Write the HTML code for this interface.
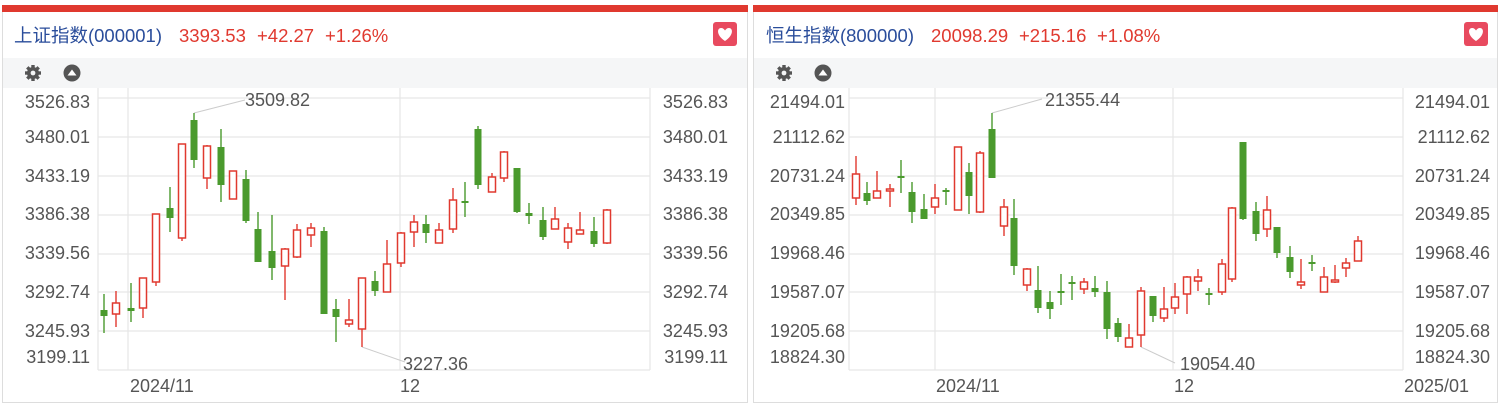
<!DOCTYPE html>
<html><head><meta charset="utf-8"><style>
html,body{margin:0;padding:0;background:#fff;width:1500px;height:405px;overflow:hidden}
svg{display:block}
text{font-family:"Liberation Sans","Noto Sans CJK SC",sans-serif}
.ax{fill:#555;font-size:18px}
.g line{stroke:#4a9a2d;stroke-width:1.4}
.g rect{fill:#4a9a2d}
.r line{stroke:#e0392f;stroke-width:1.4}
.r rect{fill:#fff;stroke:#e0392f;stroke-width:1.5}
.grid line{stroke:#e6e6e6;stroke-width:1.2}
.hd{font-size:18.5px}
</style></head><body>
<svg width="1500" height="405" viewBox="0 0 1500 405">
<defs>
<g id="gear"><circle r="6" fill="#555"/><g stroke="#555" stroke-width="3.4">
<line x1="0" y1="-8" x2="0" y2="8"/><line x1="-8" y1="0" x2="8" y2="0"/>
<line x1="-5.7" y1="-5.7" x2="5.7" y2="5.7"/><line x1="-5.7" y1="5.7" x2="5.7" y2="-5.7"/></g>
<circle r="2.4" fill="#f5f6f7"/></g>
<g id="up"><circle r="8.5" fill="#555"/><path d="M-4.5 2.5 L0 -3.5 L4.5 2.5Z" fill="#fff"/></g>
<g id="heart"><rect x="-12" y="-12" width="24" height="24" rx="3" fill="#e84a5f"/><path d="M0 7 C-9 1 -8 -6 -4 -6 C-2 -6 -1 -5 0 -3.5 C1 -5 2 -6 4 -6 C8 -6 9 1 0 7Z" fill="#fff"/></g>
</defs>

<!-- LEFT PANEL -->
<rect x="2.5" y="5.5" width="745" height="397" fill="#fff" stroke="#ddd"/>
<rect x="2" y="5" width="746" height="7" fill="#e0392f"/>
<rect x="3" y="58" width="744" height="30" fill="#f5f6f7"/>
<text class="hd" x="14" y="42" fill="#2a4d9b" textLength="148" lengthAdjust="spacingAndGlyphs">上证指数(000001)</text>
<text class="hd" x="179" y="42" fill="#e0392f">3393.53</text>
<text class="hd" x="257" y="42" fill="#e0392f">+42.27</text>
<text class="hd" x="325" y="42" fill="#e0392f">+1.26%</text>
<use href="#heart" x="725" y="34"/>
<use href="#gear" x="33" y="73"/>
<use href="#up" x="72" y="73"/>
<g class="grid">
<line x1="98" y1="98" x2="650" y2="98"/><line x1="98" y1="137" x2="650" y2="137"/><line x1="98" y1="176" x2="650" y2="176"/><line x1="98" y1="215" x2="650" y2="215"/><line x1="98" y1="254" x2="650" y2="254"/><line x1="98" y1="292" x2="650" y2="292"/><line x1="98" y1="331" x2="650" y2="331"/><line x1="98" y1="370" x2="650" y2="370"/>
<line x1="98" y1="88" x2="98" y2="370"/><line x1="128" y1="88" x2="128" y2="370"/><line x1="400" y1="88" x2="400" y2="370"/><line x1="650" y1="88" x2="650" y2="370"/>
</g>
<g class="ax" text-anchor="end">
<text x="90" y="108">3526.83</text><text x="90" y="143">3480.01</text><text x="90" y="182">3433.19</text><text x="90" y="220">3386.38</text><text x="90" y="259">3339.56</text><text x="90" y="298">3292.74</text><text x="90" y="337">3245.93</text><text x="90" y="363">3199.11</text>
<text x="728" y="108">3526.83</text><text x="728" y="143">3480.01</text><text x="728" y="182">3433.19</text><text x="728" y="220">3386.38</text><text x="728" y="259">3339.56</text><text x="728" y="298">3292.74</text><text x="728" y="337">3245.93</text><text x="728" y="363">3199.11</text>
</g>
<text class="ax" x="130" y="392">2024/11</text>
<text class="ax" x="400" y="392">12</text>
<polyline points="194,113 245,100" fill="none" stroke="#ccc"/>
<text class="ax" x="245" y="106">3509.82</text>
<polyline points="362,347 405,362" fill="none" stroke="#ccc"/>
<text class="ax" x="403" y="370">3227.36</text>

<g class="g">
<line x1="104" y1="294" x2="104" y2="333"/><rect x="100.5" y="310" width="7" height="6"/>
<line x1="131" y1="283" x2="131" y2="322"/><rect x="127.5" y="308" width="7" height="3"/>
<line x1="170" y1="187" x2="170" y2="232"/><rect x="166.5" y="208" width="7" height="10"/>
<line x1="194" y1="113" x2="194" y2="168"/><rect x="190.5" y="120" width="7" height="40"/>
<line x1="221" y1="129" x2="221" y2="202"/><rect x="217.5" y="147" width="7" height="38"/>
<line x1="246" y1="170" x2="246" y2="223"/><rect x="242.5" y="179" width="7" height="42"/>
<line x1="258" y1="212" x2="258" y2="262"/><rect x="254.5" y="229" width="7" height="33"/>
<line x1="272" y1="215" x2="272" y2="280"/><rect x="268.5" y="251" width="7" height="17"/>
<line x1="324" y1="227" x2="324" y2="314"/><rect x="320.5" y="231" width="7" height="83"/>
<line x1="336" y1="299" x2="336" y2="342"/><rect x="332.5" y="309" width="7" height="8"/>
<line x1="375" y1="271" x2="375" y2="296"/><rect x="371.5" y="281" width="7" height="10"/>
<line x1="426" y1="215" x2="426" y2="243"/><rect x="422.5" y="224" width="7" height="9"/>
<line x1="465" y1="182" x2="465" y2="217"/><rect x="461.5" y="201" width="7" height="2"/>
<line x1="478" y1="126" x2="478" y2="189"/><rect x="474.5" y="129" width="7" height="56"/>
<line x1="517" y1="168" x2="517" y2="213"/><rect x="513.5" y="168" width="7" height="44"/>
<line x1="529" y1="203" x2="529" y2="224"/><rect x="525.5" y="213" width="7" height="3"/>
<line x1="543" y1="207" x2="543" y2="240"/><rect x="539.5" y="220" width="7" height="17"/>
<line x1="594" y1="217" x2="594" y2="247"/><rect x="590.5" y="231" width="7" height="13"/>
</g>
<g class="r">
<line x1="116" y1="291" x2="116" y2="327"/><rect x="112.5" y="303" width="7" height="11"/>
<line x1="143" y1="278" x2="143" y2="318"/><rect x="139.5" y="278" width="7" height="30"/>
<line x1="156" y1="214" x2="156" y2="286"/><rect x="152.5" y="214" width="7" height="68"/>
<line x1="182" y1="144" x2="182" y2="241"/><rect x="178.5" y="144" width="7" height="94"/>
<line x1="207" y1="145" x2="207" y2="189"/><rect x="203.5" y="146" width="7" height="32"/>
<line x1="233" y1="171" x2="233" y2="199"/><rect x="229.5" y="171" width="7" height="28"/>
<line x1="285" y1="248" x2="285" y2="300"/><rect x="281.5" y="249" width="7" height="17"/>
<line x1="297" y1="224" x2="297" y2="258"/><rect x="293.5" y="230" width="7" height="27"/>
<line x1="311" y1="223" x2="311" y2="247"/><rect x="307.5" y="228" width="7" height="7"/>
<line x1="349" y1="299" x2="349" y2="327"/><rect x="345.5" y="320" width="7" height="4"/>
<line x1="362" y1="278" x2="362" y2="347"/><rect x="358.5" y="278" width="7" height="51"/>
<line x1="387" y1="240" x2="387" y2="292"/><rect x="383.5" y="264" width="7" height="28"/>
<line x1="401" y1="232" x2="401" y2="267"/><rect x="397.5" y="233" width="7" height="30"/>
<line x1="414" y1="215" x2="414" y2="247"/><rect x="410.5" y="222" width="7" height="10"/>
<line x1="439" y1="223" x2="439" y2="243"/><rect x="435.5" y="230" width="7" height="13"/>
<line x1="453" y1="188" x2="453" y2="233"/><rect x="449.5" y="200" width="7" height="29"/>
<line x1="492" y1="173" x2="492" y2="192"/><rect x="488.5" y="177" width="7" height="15"/>
<line x1="504" y1="151" x2="504" y2="182"/><rect x="500.5" y="152" width="7" height="26"/>
<line x1="555" y1="207" x2="555" y2="229"/><rect x="551.5" y="219" width="7" height="10"/>
<line x1="568" y1="223" x2="568" y2="249"/><rect x="564.5" y="228" width="7" height="14"/>
<line x1="580" y1="212" x2="580" y2="234"/><rect x="576.5" y="230" width="7" height="4"/>
<line x1="607" y1="209" x2="607" y2="244"/><rect x="603.5" y="210" width="7" height="33"/>
</g>

<!-- RIGHT PANEL -->
<rect x="753.5" y="5.5" width="744" height="397" fill="#fff" stroke="#ddd"/>
<rect x="753" y="5" width="745" height="7" fill="#e0392f"/>
<rect x="754" y="58" width="743" height="30" fill="#f5f6f7"/>
<text class="hd" x="766" y="42" fill="#2a4d9b" textLength="148" lengthAdjust="spacingAndGlyphs">恒生指数(800000)</text>
<text class="hd" x="931" y="42" fill="#e0392f">20098.29</text>
<text class="hd" x="1019" y="42" fill="#e0392f">+215.16</text>
<text class="hd" x="1097" y="42" fill="#e0392f">+1.08%</text>
<use href="#heart" x="1476" y="34"/>
<use href="#gear" x="784" y="73"/>
<use href="#up" x="823" y="73"/>
<g class="grid">
<line x1="849" y1="98" x2="1403" y2="98"/><line x1="849" y1="137" x2="1403" y2="137"/><line x1="849" y1="176" x2="1403" y2="176"/><line x1="849" y1="215" x2="1403" y2="215"/><line x1="849" y1="254" x2="1403" y2="254"/><line x1="849" y1="292" x2="1403" y2="292"/><line x1="849" y1="331" x2="1403" y2="331"/><line x1="849" y1="370" x2="1403" y2="370"/>
<line x1="849" y1="88" x2="849" y2="370"/><line x1="935" y1="88" x2="935" y2="370"/><line x1="1173" y1="88" x2="1173" y2="370"/><line x1="1403" y1="88" x2="1403" y2="370"/>
</g>
<g class="ax" text-anchor="end">
<text x="845" y="108">21494.01</text><text x="845" y="143">21112.62</text><text x="845" y="182">20731.24</text><text x="845" y="220">20349.85</text><text x="845" y="259">19968.46</text><text x="845" y="298">19587.07</text><text x="845" y="337">19205.68</text><text x="845" y="363">18824.30</text>
<text x="1490" y="108">21494.01</text><text x="1490" y="143">21112.62</text><text x="1490" y="182">20731.24</text><text x="1490" y="220">20349.85</text><text x="1490" y="259">19968.46</text><text x="1490" y="298">19587.07</text><text x="1490" y="337">19205.68</text><text x="1490" y="363">18824.30</text>
</g>
<text class="ax" x="936" y="392">2024/11</text>
<text class="ax" x="1174" y="392">12</text>
<text class="ax" x="1404" y="392">2025/01</text>
<polyline points="992,113 1042,99" fill="none" stroke="#ccc"/>
<text class="ax" x="1045" y="106">21355.44</text>
<polyline points="1141,347 1175,363" fill="none" stroke="#ccc"/>
<text class="ax" x="1180" y="370">19054.40</text>

<g class="g">
<line x1="867" y1="182" x2="867" y2="205"/><rect x="863.5" y="193" width="7" height="8"/>
<line x1="901" y1="160" x2="901" y2="193"/><rect x="897.5" y="176" width="7" height="2"/>
<line x1="912" y1="182" x2="912" y2="223"/><rect x="908.5" y="192" width="7" height="20"/>
<line x1="924" y1="194" x2="924" y2="219"/><rect x="920.5" y="209" width="7" height="10"/>
<line x1="946" y1="188" x2="946" y2="205"/><rect x="942.5" y="190" width="7" height="2"/>
<line x1="969" y1="163" x2="969" y2="214"/><rect x="965.5" y="172" width="7" height="24"/>
<line x1="992" y1="113" x2="992" y2="178"/><rect x="988.5" y="129" width="7" height="49"/>
<line x1="1014" y1="199" x2="1014" y2="275"/><rect x="1010.5" y="218" width="7" height="48"/>
<line x1="1038" y1="266" x2="1038" y2="313"/><rect x="1034.5" y="290" width="7" height="18"/>
<line x1="1050" y1="291" x2="1050" y2="319"/><rect x="1046.5" y="302" width="7" height="7"/>
<line x1="1061" y1="274" x2="1061" y2="305"/><rect x="1057.5" y="291" width="7" height="2"/>
<line x1="1072" y1="276" x2="1072" y2="300"/><rect x="1068.5" y="282" width="7" height="2"/>
<line x1="1095" y1="276" x2="1095" y2="297"/><rect x="1091.5" y="288" width="7" height="4"/>
<line x1="1107" y1="281" x2="1107" y2="339"/><rect x="1103.5" y="292" width="7" height="37"/>
<line x1="1118" y1="318" x2="1118" y2="342"/><rect x="1114.5" y="323" width="7" height="14"/>
<line x1="1153" y1="296" x2="1153" y2="322"/><rect x="1149.5" y="296" width="7" height="20"/>
<line x1="1209" y1="288" x2="1209" y2="305"/><rect x="1205.5" y="293" width="7" height="2"/>
<line x1="1243" y1="142" x2="1243" y2="220"/><rect x="1239.5" y="142" width="7" height="77"/>
<line x1="1256" y1="202" x2="1256" y2="241"/><rect x="1252.5" y="211" width="7" height="23"/>
<line x1="1277" y1="227" x2="1277" y2="258"/><rect x="1273.5" y="227" width="7" height="26"/>
<line x1="1290" y1="246" x2="1290" y2="278"/><rect x="1286.5" y="257" width="7" height="15"/>
<line x1="1312" y1="255" x2="1312" y2="271"/><rect x="1308.5" y="262" width="7" height="2"/>
</g>
<g class="r">
<line x1="856" y1="156" x2="856" y2="205"/><rect x="852.5" y="174" width="7" height="24"/>
<line x1="877" y1="171" x2="877" y2="198"/><rect x="873.5" y="191" width="7" height="7"/>
<line x1="890" y1="184" x2="890" y2="207"/><rect x="886.5" y="189" width="7" height="2"/>
<line x1="935" y1="184" x2="935" y2="214"/><rect x="931.5" y="198" width="7" height="9"/>
<rect x="954.5" y="147" width="7" height="63"/>
<line x1="980" y1="151" x2="980" y2="213"/><rect x="976.5" y="153" width="7" height="59"/>
<line x1="1004" y1="199" x2="1004" y2="236"/><rect x="1000.5" y="207" width="7" height="19"/>
<line x1="1027" y1="268" x2="1027" y2="291"/><rect x="1023.5" y="269" width="7" height="16"/>
<line x1="1084" y1="278" x2="1084" y2="294"/><rect x="1080.5" y="282" width="7" height="7"/>
<line x1="1129" y1="324" x2="1129" y2="347"/><rect x="1125.5" y="338" width="7" height="9"/>
<line x1="1141" y1="287" x2="1141" y2="347"/><rect x="1137.5" y="291" width="7" height="44"/>
<line x1="1164" y1="287" x2="1164" y2="322"/><rect x="1160.5" y="309" width="7" height="9"/>
<line x1="1175" y1="283" x2="1175" y2="314"/><rect x="1171.5" y="297" width="7" height="11"/>
<line x1="1187" y1="276" x2="1187" y2="314"/><rect x="1183.5" y="277" width="7" height="17"/>
<line x1="1198" y1="269" x2="1198" y2="291"/><rect x="1194.5" y="277" width="7" height="4"/>
<line x1="1222" y1="259" x2="1222" y2="295"/><rect x="1218.5" y="264" width="7" height="28"/>
<line x1="1232" y1="207" x2="1232" y2="282"/><rect x="1228.5" y="208" width="7" height="71"/>
<line x1="1267" y1="196" x2="1267" y2="237"/><rect x="1263.5" y="210" width="7" height="19"/>
<line x1="1301" y1="259" x2="1301" y2="289"/><rect x="1297.5" y="282" width="7" height="3"/>
<line x1="1324" y1="267" x2="1324" y2="292"/><rect x="1320.5" y="277" width="7" height="15"/>
<line x1="1335" y1="265" x2="1335" y2="283"/><rect x="1331.5" y="280" width="7" height="2"/>
<line x1="1346" y1="258" x2="1346" y2="277"/><rect x="1342.5" y="263" width="7" height="5"/>
<line x1="1358" y1="236" x2="1358" y2="261"/><rect x="1354.5" y="241" width="7" height="20"/>
</g>
</svg>
</body></html>
